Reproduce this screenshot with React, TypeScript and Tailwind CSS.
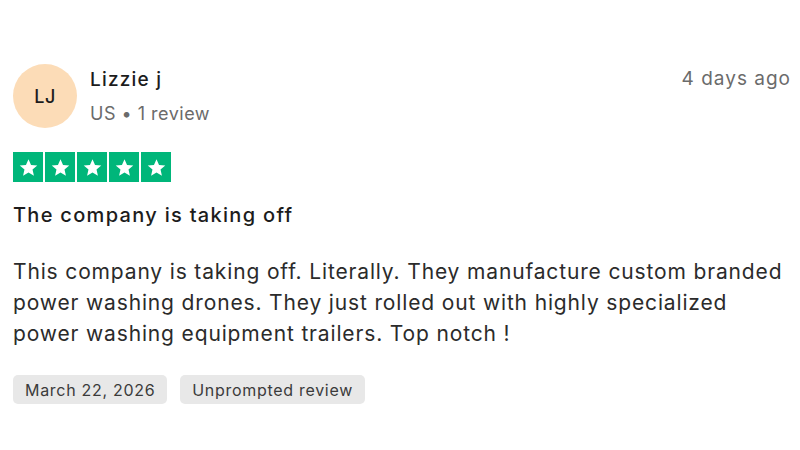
import React from "react";

const Star = () => (
  <div className="w-[30px] h-[30px] bg-[#00b67a] flex items-center justify-center">
    <svg viewBox="0 0 24 24" width="21" height="21">
      <path
        d="M12 2.5l2.9 6.6 7.1.6-5.4 4.7 1.6 7-6.2-3.7-6.2 3.7 1.6-7L2 9.7l7.1-.6z"
        fill="#fff"
      />
    </svg>
  </div>
);

export default function App() {
  return (
    <div
      className="w-[800px] h-[450px] bg-white text-[#1c1c1c] px-[13px] pt-[64px]"
      style={{ fontFamily: "Inter, 'Noto Sans', sans-serif" }}
    >
      <div className="flex items-start">
        <div className="w-[64px] h-[64px] rounded-full bg-[#fcdcb7] flex items-center justify-center text-[18px] font-medium tracking-[0.5px] text-[#1c1c1c] shrink-0">
          LJ
        </div>
        <div className="ml-[13px] flex flex-col pt-[3px]">
          <div className="text-[19px] font-medium leading-[26px] tracking-[1.2px] text-[#1c1c1c]">Lizzie j</div>
          <div className="text-[18px] leading-[26px] mt-[8px] tracking-[0.5px] text-[#6b6b6b]">US • 1 review</div>
        </div>
        <div className="ml-auto text-[19px] leading-[26px] tracking-[1px] text-[#6b6b6b] pt-[2px] -mr-[4px]">4 days ago</div>
      </div>
      <div className="flex gap-[2px] mt-[24px]">
        <Star />
        <Star />
        <Star />
        <Star />
        <Star />
      </div>
      <div className="mt-[20px] text-[20px] font-medium leading-[26px] tracking-[1.3px] text-[#1c1c1c]">
        The company is taking off
      </div>
      <p className="mt-[28px] text-[21px] leading-[31px] tracking-[0.85px] text-[#2b2b2b] w-[772px]">
        This company is taking off. Literally. They manufacture custom branded power washing drones. They just rolled out with highly specialized power washing equipment trailers. Top notch !
      </p>
      <div className="flex gap-[13px] mt-[26px]">
        <span className="bg-[#e8e8e8] rounded-[5px] px-[12px] h-[29px] flex items-center text-[16px] tracking-[0.7px] text-[#3b3b3b]">
          March 22, 2026
        </span>
        <span className="bg-[#e8e8e8] rounded-[5px] px-[12px] h-[29px] flex items-center text-[16px] tracking-[0.7px] text-[#3b3b3b]">
          Unprompted review
        </span>
      </div>
    </div>
  );
}
